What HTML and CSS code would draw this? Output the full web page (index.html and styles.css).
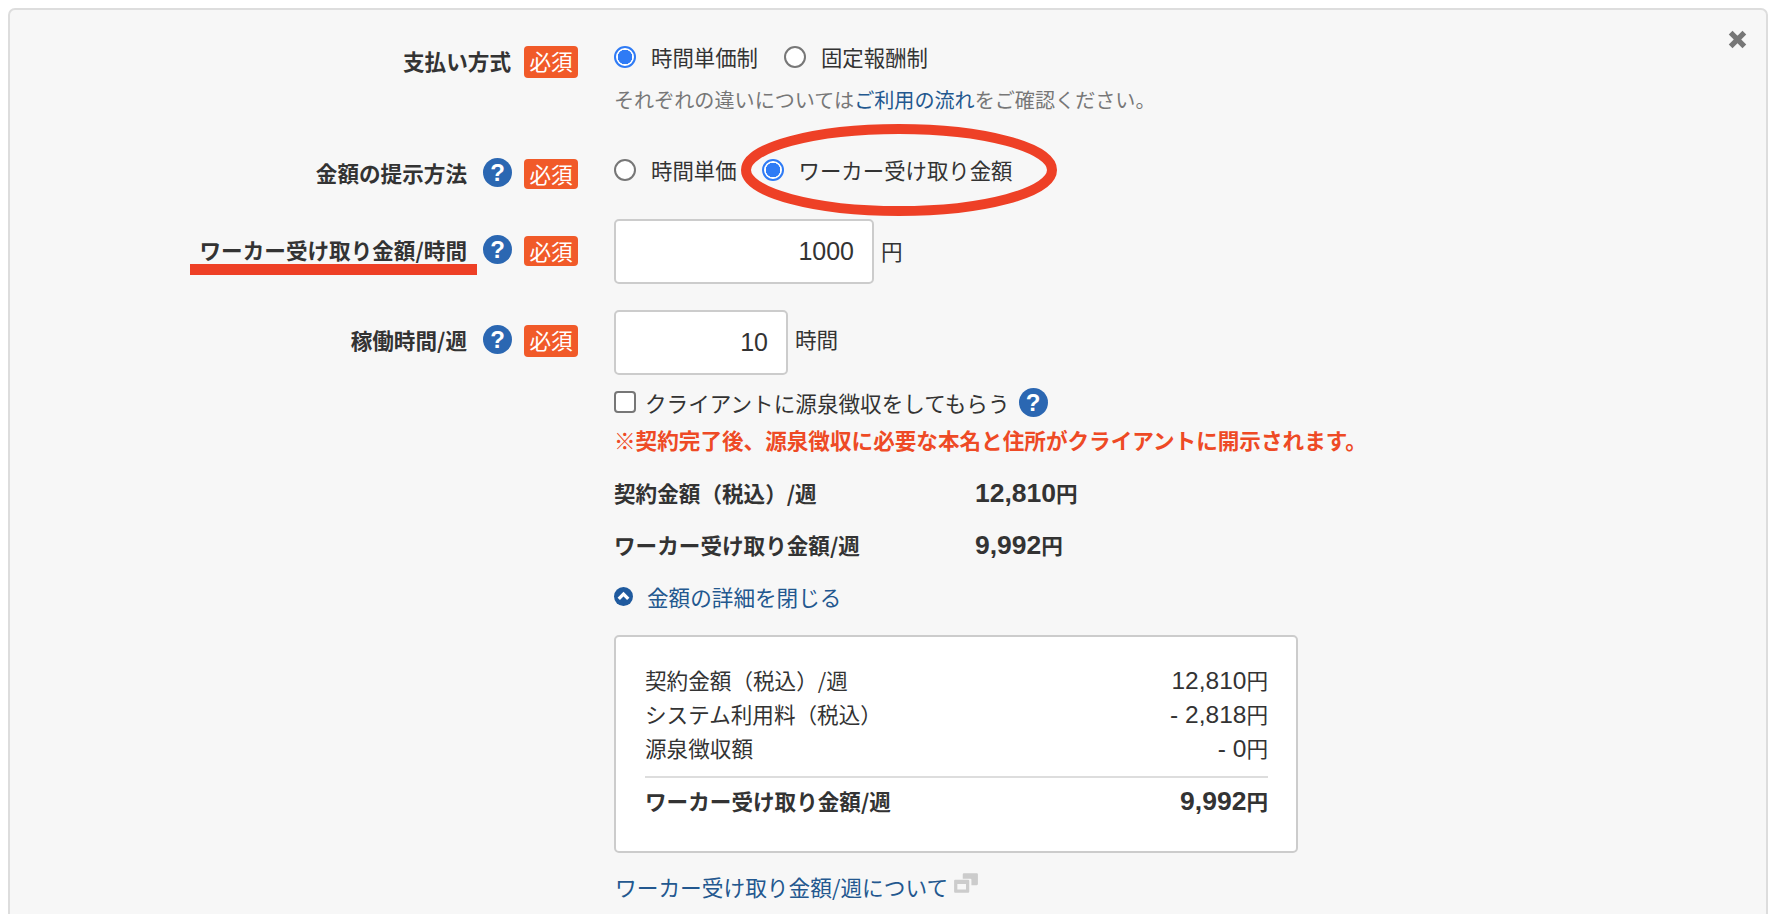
FILE: index.html
```html
<!DOCTYPE html>
<html lang="ja">
<head>
  <meta charset="UTF-8">
  <title>支払い方式</title>
  <link rel="stylesheet" href="styles.css">
</head>
<body>
  <div class="panel">
    <svg class="close" viewBox="0 0 18 18"><path d="M2.5 2.5l13 13M15.5 2.5l-13 13"/></svg>

    <div class="row row-pay">
      <div class="label"><span class="label-text">支払い方式</span><span class="badge">必須</span></div>
      <div class="value">
        <div class="options">
          <label class="option"><input type="radio" name="pay" checked>時間単価制</label>
          <label class="option"><input type="radio" name="pay">固定報酬制</label>
        </div>
        <p class="hint">それぞれの違いについては<a href="#">ご利用の流れ</a>をご確認ください。</p>
      </div>
    </div>

    <div class="row row-method">
      <div class="label label-method"><span class="label-text">金額の提示方法</span><span class="help">?</span><span class="badge">必須</span></div>
      <div class="value">
        <div class="options options-tight">
          <label class="option"><input type="radio" name="method">時間単価</label>
          <label class="option"><input type="radio" name="method" checked>ワーカー受け取り金額</label>
        </div>
      </div>
    </div>

    <div class="row row-rate">
      <div class="label"><span class="label-text">ワーカー受け取り金額/時間</span><span class="help">?</span><span class="badge">必須</span></div>
      <div class="value field">
        <input class="amount amount-wide" type="text" value="1000"><span class="unit">円</span>
      </div>
    </div>

    <div class="row row-hours">
      <div class="label"><span class="label-text">稼働時間/週</span><span class="help">?</span><span class="badge">必須</span></div>
      <div class="value">
        <div class="field">
          <input class="amount amount-small" type="text" value="10"><span class="unit unit-up">時間</span>
        </div>
        <label class="check"><input type="checkbox">クライアントに源泉徴収をしてもらう<span class="help">?</span></label>
        <p class="warning">※契約完了後、源泉徴収に必要な本名と住所がクライアントに開示されます。</p>

        <dl class="totals">
          <dt>契約金額（税込）/週</dt><dd><span class="num">12,810</span>円</dd>
          <dt>ワーカー受け取り金額/週</dt><dd><span class="num">9,992</span>円</dd>
        </dl>

        <a class="toggle" href="#">
          <svg class="toggle-icon" viewBox="0 0 20 20"><circle cx="10" cy="10" r="10"/><path d="M5 12.5l5-5 5 5"/></svg>金額の詳細を閉じる
        </a>

        <div class="detail">
          <div class="detail-row"><span>契約金額（税込）/週</span><span><span class="num">12,810</span>円</span></div>
          <div class="detail-row"><span>システム利用料（税込）</span><span><span class="num">- 2,818</span>円</span></div>
          <div class="detail-row"><span>源泉徴収額</span><span><span class="num">- 0</span>円</span></div>
          <div class="detail-row detail-total"><span>ワーカー受け取り金額/週</span><span><span class="num">9,992</span>円</span></div>
        </div>

        <a class="about" href="#">ワーカー受け取り金額/週について<svg class="copy-icon" viewBox="0 0 24 20"><path d="M10 1h12a1 1 0 0 1 1 1v9a1 1 0 0 1-1 1h-5V7a1 1 0 0 0-1-1h-7V2a1 1 0 0 1 1-1z"/><path d="M2 7h12a1 1 0 0 1 1 1v10a1 1 0 0 1-1 1H2a1 1 0 0 1-1-1V8a1 1 0 0 1 1-1zm2 4v5h8v-5z" fill-rule="evenodd"/></svg></a>
      </div>
    </div>

    <!-- marker drawn on top of the screenshot -->
    <svg class="mark-ellipse" viewBox="0 0 316 92"><ellipse cx="158" cy="46" rx="153" ry="41"/></svg>
    <div class="mark-line"></div>
  </div>
</body>
</html>
```

FILE: styles.css
```css
html, body {
  height: 100%;
  overflow: hidden;
}
body {
  margin: 0;
  padding: 8px 10px 0 8px;
  background-color: #fff;
  color: #333;
  font-family: "Noto Sans CJK JP", "Liberation Sans", sans-serif;
  font-size: 21.6px;
}
p {
  margin: 0;
}
a {
  color: #23588f;
  text-decoration: none;
}
.panel {
  position: relative;
  height: 940px;
  box-sizing: border-box;
  padding-top: 36px;
  background-color: #f7f7f7;
  border: 2px solid #ddd;
  border-radius: 7px;
}
.close {
  position: absolute;
  top: 20px;
  right: 19px;
  width: 19px;
  height: 19px;
}
.close path {
  fill: none;
  stroke: #777;
  stroke-width: 5;
}
.row {
  display: grid;
  grid-template-columns: 568px 1fr;
  column-gap: 36px;
}
.row-method {
  margin-top: 44px;
}
.row-rate {
  margin-top: 30px;
}
.row-hours {
  margin-top: 26px;
}
.label {
  display: flex;
  justify-content: flex-end;
  align-items: center;
  height: 32px;
}
.label-method {
  height: 30px;
}
.row-rate .label {
  margin-top: 17px;
  height: 30px;
}
.row-hours .label {
  margin-top: 15px;
}
.label-text {
  padding-bottom: 2px;
  font-weight: 700;
  line-height: 30px;
}
.badge {
  width: 54px;
  height: 100%;
  margin-left: 13px;
  background-color: #f15a29;
  border-radius: 4px;
  color: #fff;
  font-size: 21.6px;
  line-height: 30px;
  text-align: center;
}
.help {
  flex: none;
  width: 29px;
  height: 29px;
  margin-left: 16px;
  background-color: #2b67b2;
  border-radius: 50%;
  color: #fff;
  font-family: "Liberation Sans", sans-serif;
  font-size: 24px;
  font-weight: 700;
  line-height: 29px;
  text-align: center;
}
.label .help {
  margin-top: -3px;
}
.label .help + .badge {
  margin-left: 12px;
}
.options {
  display: flex;
  gap: 26px;
  margin-top: -1px;
}
.options-tight {
  gap: 25px;
}
.option {
  display: flex;
  align-items: center;
  height: 22px;
  padding-bottom: 2px;
  font-size: 21.4px;
}
input[type="radio"] {
  appearance: none;
  flex: none;
  width: 22px;
  height: 22px;
  margin: 2px 15px 0 0;
  box-sizing: border-box;
  background-color: #fff;
  border: 2px solid #777;
  border-radius: 50%;
}
input[type="radio"]:checked {
  border-color: #2f7bf5;
  background: radial-gradient(circle, #2f7bf5 0 7px, #fff 7.5px);
}
.hint {
  margin-top: 16px;
  color: #777;
  font-size: 20.1px;
  line-height: 30px;
}
.field {
  display: flex;
  align-items: center;
  gap: 7px;
}
.unit {
  padding-bottom: 2px;
}
.amount {
  height: 65px;
  box-sizing: border-box;
  padding: 0 18px 0 0;
  background-color: #fff;
  border: 2px solid #ccc;
  border-radius: 5px;
  color: #333;
  font-family: "Liberation Sans", sans-serif;
  font-size: 25px;
  text-align: right;
}
.amount-wide {
  width: 260px;
}
.amount-small {
  width: 174px;
}
.unit-up {
  margin-top: -6px;
}
.check {
  display: flex;
  align-items: center;
  height: 22px;
  margin-top: 16px;
}
.check input {
  appearance: none;
  width: 22px;
  height: 22px;
  margin: 0 9px 0 0;
  box-sizing: border-box;
  background-color: #fff;
  border: 2px solid #777;
  border-radius: 4px;
}
.check .help {
  margin-left: 9px;
}
.warning {
  margin-top: 16px;
  color: #ee4a25;
  font-weight: 700;
  line-height: 22px;
}
.totals {
  display: grid;
  grid-template-columns: 361px 1fr;
  row-gap: 22px;
  margin: 27px 0 0;
  font-weight: 700;
  line-height: 30px;
}
.totals dd {
  margin: 0;
}
.num {
  font-family: "Liberation Sans", sans-serif;
  font-size: 24.5px;
}
.totals .num, .detail-total .num {
  font-size: 26.5px;
}
.toggle {
  display: flex;
  align-items: center;
  height: 30px;
  margin-top: 21px;
}
.toggle-icon {
  width: 19px;
  height: 19px;
  margin-right: 14px;
}
.toggle-icon circle {
  fill: #1f5a9e;
}
.toggle-icon path {
  fill: none;
  stroke: #fff;
  stroke-width: 3.5;
}
.detail {
  width: 684px;
  box-sizing: border-box;
  margin-top: 24px;
  padding: 26px 28px 28px 29px;
  background-color: #fff;
  border: 2px solid #ccc;
  border-radius: 5px;
}
.detail-row {
  display: flex;
  justify-content: space-between;
  height: 34px;
  line-height: 34px;
}
.detail-total {
  height: 39px;
  margin-top: 11px;
  padding-top: 6px;
  border-top: 2px solid #ddd;
  font-weight: 700;
}
.about {
  display: flex;
  align-items: center;
  height: 30px;
  margin-top: 18px;
  padding-left: 1px;
  font-size: 21.7px;
}
.copy-icon {
  width: 26px;
  height: 22px;
  margin: -6px 0 0 5px;
  fill: #ccc;
}
.mark-ellipse {
  position: absolute;
  left: 731px;
  top: 114px;
  width: 316px;
  height: 92px;
}
.mark-ellipse ellipse {
  fill: none;
  stroke: #ee4026;
  stroke-width: 10;
}
.mark-line {
  position: absolute;
  left: 180px;
  top: 254px;
  width: 287px;
  height: 11px;
  background-color: #ee4026;
}
```
